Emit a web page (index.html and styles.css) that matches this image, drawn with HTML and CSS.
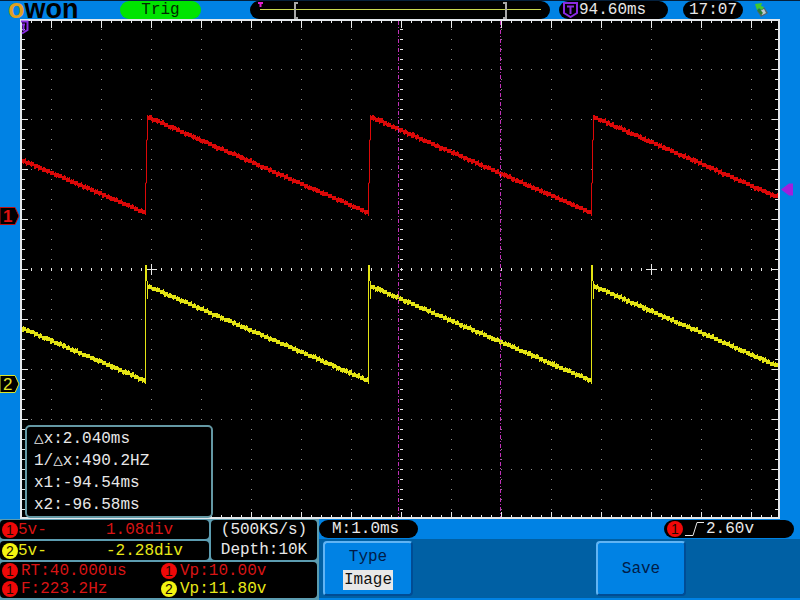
FILE: index.html
```html
<!DOCTYPE html>
<html lang="en">
<head>
  <meta charset="UTF-8">
  <meta name="viewport" content="width=device-width, initial-scale=1.0">
  <title>OWON Oscilloscope</title>
  <link rel="stylesheet" href="styles.css">
</head>
<body>
  <header class="topbar">
    <div class="logo"><span class="logo-o">o</span>won</div>
    <div class="trig">Trig</div>
    <div class="pill memory">
      <svg viewBox="0 0 300 18">
        <path class="mem-line" d="M10 8.5H291"/>
        <path class="mem-trigger" d="M8 2H13M10.5 2V6"/>
        <path class="mem-bracket" d="M48 2H45V17H48M253 2H256V17H253"/>
      </svg>
    </div>
    <div class="pill delay">
      <svg width="15" height="16" viewBox="0 0 15 16">
        <path d="M1 1H14V11L7.5 15L1 11ZM4 4.5H11M7.5 4.5V12"/>
      </svg>
      <span>94.60ms</span>
    </div>
    <div class="pill clock">17:07</div>
    <svg class="usb" width="15" height="16" viewBox="0 0 15 16">
      <path fill="#52656e" d="M3 9L10 5L14 11L7 15Z"/>
      <path fill="#bccbd0" d="M6 9L10 7L12 11L8 13Z"/>
      <path fill="#287f35" d="M5 6L9 11L7 13L3 8Z"/>
      <path fill="#43c92d" d="M1 2L8 1L7 4L10 5L8 8L5 6L3 8Z"/>
    </svg>
  </header>

  <main class="plot">
    <svg class="scope" viewBox="22 21 756 496">
      <path id="dots" class="dots"/>
      <path id="ticks" class="ticks"/>
      <path id="ch1" class="ch1"/>
      <path id="ch2" class="ch2"/>
      <path id="ch1-edges" class="ch1"/>
      <path id="ch2-edges" class="ch2"/>
      <path class="cursor" d="M398.5 21V517M500.5 21V517"/>

      <!-- trigger position -->
      <path class="trigger-pos" d="M21 21.5H27.5V30L22 33.5M22 24.5H25M23.5 24.5V31"/>

      <!-- channel zero markers -->
      <path class="marker1" d="M0 207.5H15L19 216L15 224.5H0Z"/>
      <text class="mark mark1" x="3" y="222">1</text>
      <path class="marker2" d="M0 375.5H15L19 384L15 392.5H0Z"/>
      <text class="mark mark2" x="3" y="390">2</text>

      <!-- trigger level -->
      <path class="level" d="M781 189.5L789 183.5H793V195.5H789Z"/>
    </svg>
    <div class="cursor-info">
      <p>△x:2.040ms</p>
      <p>1/△x:490.2HZ</p>
      <p>x1:-94.54ms</p>
      <p>x2:-96.58ms</p>
    </div>
  </main>

  <footer class="bottom">
    <div class="readouts">
      <div class="panel channel red"><span class="badge">1</span><span>5v-</span><span>1.08div</span></div>
      <div class="panel channel yellow"><span class="badge">2</span><span>5v-</span><span>-2.28div</span></div>
      <div class="panel sample">
        <span>(500KS/s)</span>
        <span>Depth:10K</span>
      </div>
      <div class="panel measures">
        <div class="measure red"><span class="badge">1</span>RT:40.000us</div>
        <div class="measure red"><span class="badge">1</span>Vp:10.00v</div>
        <div class="measure red"><span class="badge">1</span>F:223.2Hz</div>
        <div class="measure yellow"><span class="badge">2</span>Vp:11.80v</div>
      </div>
    </div>
    <div class="controls">
      <div class="status">
        <div class="pill timebase">M:1.0ms</div>
        <div class="pill trigger-level">
          <span class="red"><span class="badge">1</span></span>
          <svg width="21" height="16" viewBox="0 0 21 16"><path d="M1 14.5H9L13 1.5H20"/></svg>
          <span>2.60v</span>
        </div>
      </div>
      <div class="menu">
        <button class="type" type="button">Type<span class="value">Image</span></button>
        <button class="save" type="button">Save</button>
      </div>
    </div>
  </footer>
  <script src="script.js"></script>
</body>
</html>
```

FILE: styles.css
```css
* {
  box-sizing: border-box;
}
body {
  display: flex;
  flex-direction: column;
  min-height: 100vh;
  margin: 0;
  background-color: #0082e4;
  color: #e8e8e8;
  font-family: "Liberation Mono", "DejaVu Sans Mono", monospace;
  font-size: 16px;
  line-height: 18px;
}

/* Top bar */
.topbar {
  display: flex;
  height: 19px;
  border-top: 1px solid #04203c;
}
.pill {
  height: 18px;
  border-radius: 9px;
  background-color: #000;
}
.logo {
  width: 112px;
  padding-left: 8px;
  color: #000;
  font-family: "Liberation Sans", sans-serif;
  font-size: 27px;
  font-weight: bold;
  line-height: 16px;
}
.logo-o {
  color: #e0a020;
}
.trig {
  width: 81px;
  border-radius: 9px;
  background-color: #00e400;
  color: #002800;
  text-align: center;
}
.topbar .trig {
  margin-left: 8px;
}
.memory {
  flex: 1;
  margin-left: 49px;
}
.memory svg {
  display: block;
  width: 100%;
  height: 18px;
}
.memory path {
  fill: none;
}
.mem-line {
  stroke: #c8d850;
}
.mem-trigger {
  stroke: #e020d0;
  stroke-width: 2;
}
.mem-bracket {
  stroke: #a8a8a8;
  stroke-width: 2;
}
.delay {
  display: flex;
  width: 109px;
  margin-left: 9px;
  padding-left: 4px;
  gap: 1px;
}
.delay svg {
  margin-top: 1px;
  fill: none;
  stroke: #8a2be2;
  stroke-width: 2;
}
.clock {
  width: 60px;
  margin-left: 15px;
  text-align: center;
}
.usb {
  margin: 1px 31px 0 11px;
}

/* Plot */
.plot {
  position: relative;
  margin: 0 20px;
  border: 2px solid #e4e8ec;
  background-color: #000;
}
.scope {
  display: block;
  width: 100%;
  overflow: visible;
}
.scope path {
  fill: none;
}
.scope .dots {
  stroke: #8c8c8c;
}
.scope .ticks {
  stroke: #e8e8e8;
}
.scope .ch1 {
  stroke: #dc0808;
}
.scope .ch2 {
  stroke: #e4e414;
}
.scope .cursor {
  stroke: #c030b8;
  stroke-dasharray: 4 2 1 2;
}
.scope .trigger-pos {
  stroke: #8a2be2;
  stroke-width: 2;
}
.scope .marker1 {
  fill: #000;
  stroke: #c01010;
}
.scope .marker2 {
  fill: #000;
  stroke: #d8e428;
}
.scope .level {
  fill: #a020dc;
}
.mark {
  font-family: "Liberation Sans", sans-serif;
  font-size: 17px;
}
.mark1 {
  fill: #e01010;
  font-weight: bold;
}
.mark2 {
  fill: #e4e428;
}
.cursor-info {
  position: absolute;
  left: 3px;
  bottom: -1px;
  width: 188px;
  padding: 1px 7px 0;
  border: 2px solid #6498a4;
  border-radius: 5px;
  background-color: #000;
}
.cursor-info p {
  margin: 0;
  line-height: 22px;
}

/* Bottom */
.bottom {
  display: flex;
  flex: 1;
}
.readouts {
  display: grid;
  grid-template-columns: 209px 106px;
  grid-template-rows: 19px 19px 1fr;
  grid-auto-flow: column;
  gap: 2px;
  width: 319px;
  padding: 1px 1px 2px 0;
  background-color: #5c9cb0;
}
.panel {
  border-radius: 4px;
  background-color: #000;
}
.red {
  color: #d81414;
}
.yellow {
  color: #e8e818;
}
.badge {
  display: inline-block;
  width: 16px;
  height: 16px;
  border-radius: 8px;
  color: #200800;
  font-family: "Liberation Sans", sans-serif;
  font-size: 14px;
  line-height: 16px;
  text-align: center;
}
.red .badge {
  background-color: #f00808;
}
.yellow .badge {
  background-color: #f4f410;
}
.channel {
  display: grid;
  grid-template-columns: 16px 88px 1fr;
  align-items: center;
  padding-left: 2px;
}
.sample {
  display: flex;
  grid-row: span 2;
  flex-direction: column;
  justify-content: space-around;
  text-align: center;
}
.measures {
  display: grid;
  grid-row: 3;
  grid-column: 1 / -1;
  grid-template-columns: 159px 1fr;
  align-items: center;
  padding-left: 2px;
}
.measure {
  display: flex;
  align-items: center;
  gap: 3px;
}
.controls {
  display: flex;
  flex: 1;
  flex-direction: column;
}
.status {
  display: flex;
  justify-content: space-between;
  height: 20px;
  padding: 1px 6px 0 0;
}
.timebase {
  width: 99px;
  padding-left: 13px;
}
.trigger-level {
  display: flex;
  align-items: center;
  width: 130px;
  padding-left: 3px;
  gap: 1px;
}
.trigger-level .red {
  display: flex;
}
.trigger-level svg {
  fill: none;
  stroke: #e8e8e8;
}
.menu {
  display: grid;
  flex: 1;
  grid-template-columns: repeat(5, 90px);
  gap: 1px;
  padding: 2px 4px;
  border-bottom: 2px solid #0082e4;
  background-color: #0060a4;
}
.menu button {
  padding: 0;
  border: 2px solid;
  border-color: #60b4f4 #004c94 #004c94 #60b4f4;
  border-radius: 4px;
  background-color: #0082e4;
  color: #001c48;
  font: inherit;
}
.menu .type {
  display: flex;
  flex-direction: column;
  align-items: center;
  justify-content: center;
  gap: 4px;
}
.value {
  padding: 1px;
  background-color: #e8e8e8;
  color: #101010;
}
.save {
  grid-column: 4;
}
```

FILE: script.js
```js
const LEFT = 22, RIGHT = 778, TOP = 21, BOTTOM = 517;

function drawGraticule() {
  let dots = "";
  let ticks = "";
  for (let x = 31; x < RIGHT; x += 10) {
    const major = x % 50 === 1;
    for (let y = 69; y < BOTTOM; y += 50) {
      if (y !== 269) dots += `M${x} ${y + 0.5}h1`;
    }
    ticks += `M${x + 0.5} ${TOP}v${major ? 7 : 2}`;
    ticks += `M${x + 0.5} ${BOTTOM}v${major ? -5 : -2}`;
    ticks += `M${x + 0.5} 268v3`;
  }
  for (let y = 29; y < BOTTOM; y += 10) {
    const major = y % 50 === 19;
    for (let x = 51; x < RIGHT; x += 50) {
      if (x !== 401) dots += `M${x} ${y + 0.5}h1`;
    }
    ticks += `M${LEFT} ${y + 0.5}h${major ? 6 : 3}`;
    ticks += `M${RIGHT} ${y + 0.5}h${major ? -6 : -3}`;
    ticks += `M400 ${y + 0.5}h3`;
  }
  // reference crosses on the centre line
  for (const x of [151, 651]) {
    ticks += `M${x - 5} 269.5h11M${x + 0.5} 264v11`;
  }
  document.getElementById("dots").setAttribute("d", dots);
  document.getElementById("ticks").setAttribute("d", ticks);
}

// falling ramps, drawn one column at a time with a bit of noise
let seed = 7;
function noise() {
  seed = (seed * 1103515245 + 12345) % 2147483648;
  return seed / 2147483648;
}

function drawRamps(id, ramps) {
  let d = "";
  for (const [x1, y1, x2, y2] of ramps) {
    for (let x = x1; x < x2; x++) {
      const step = Math.floor((x - x1) / 4) * 4;
      const y = Math.round(y1 + (y2 - y1) * step / (x2 - x1));
      const up = noise() > 0.75 ? 1 : 0;
      const down = noise() > 0.8 ? 1 : 0;
      d += `M${x + 0.5} ${y - 1 - up}v${4 + up + down}`;
    }
  }
  document.getElementById(id).setAttribute("d", d);
}

drawGraticule();
drawRamps("ch1", [[22, 160, 146, 213], [148, 117, 369, 213], [371, 117, 592, 213], [594, 117, 778, 197]]);
drawRamps("ch2", [[22, 328, 146, 381], [148, 286, 369, 381], [371, 286, 592, 381], [594, 286, 778, 366]]);

let edges1 = "";
let edges2 = "";
for (const x of [145, 368, 591]) {
  edges1 += `M${x + 0.5} 214V183h1V140h1V115`;
  edges2 += `M${x + 0.5} 384V265M${x + 1.5} 265V281M${x + 2.5} 281V299`;
}
document.getElementById("ch1-edges").setAttribute("d", edges1);
document.getElementById("ch2-edges").setAttribute("d", edges2);
```
